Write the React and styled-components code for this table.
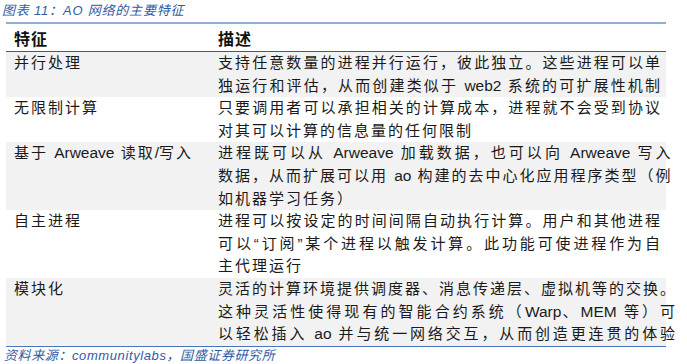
import React from 'react'
import styled, { createGlobalStyle } from 'styled-components'

const GlobalStyle = createGlobalStyle`
  body {
    margin: 0;
    background: #fff;
    font-family: "Liberation Sans", "Noto Sans CJK SC", sans-serif;
  }
`

const Page = styled.div`
  width: 687px;
  height: 364px;
  overflow: hidden;
  background: #fff;
`

const Caption = styled.div`
  height: 22px;
  line-height: 21px;
  padding-left: 2px;
  font-size: 13px;
  font-style: italic;
  color: #2f5ba6;
  letter-spacing: 0.8px;
  white-space: nowrap;
`

const Table = styled.div`
  width: 660px;
  margin-left: 6px;
  border-top: 2px solid #92acd8;
  border-bottom: 1px solid #4a74bd;
`

const Row = styled.div`
  display: grid;
  grid-template-columns: 204px 1fr;
  background: ${p => (p.$shade ? '#f2f2f2' : '#fff')};
`

const HeadRow = styled(Row)`
  height: 27px;
  align-items: center;
  border-bottom: 1px solid #2c5cb2;
`

const HeadCell = styled.div`
  padding-left: 8px;
  font-size: 16px;
  font-weight: bold;
  color: #111;
  letter-spacing: 1px;
`

const Cell = styled.div`
  padding: 0 4px 0 8px;
  font-size: 15px;
  color: #1a1a1a;
  letter-spacing: 2px;
`

const Line = styled.div`
  height: 22.6px;
  line-height: 22.6px;
  white-space: nowrap;
  text-align: left;
  text-align-last: ${p => (p.$full ? 'justify' : 'left')};
`

const Latin = styled.span`
  letter-spacing: 0;
  font-size: 15.5px;
`

const Source = styled(Caption)`
  height: auto;
  line-height: 17px;
  padding: 0 0 0 4px;
  letter-spacing: 0.6px;
`

const rows = [
  {
    name: '并行处理',
    lines: ['支持任意数量的进程并行运行，彼此独立。这些进程可以单', '独运行和评估，从而创建类似于 web2 系统的可扩展性机制'],
    last: true
  },
  {
    name: '无限制计算',
    lines: ['只要调用者可以承担相关的计算成本，进程就不会受到协议', '对其可以计算的信息量的任何限制']
  },
  {
    name: '基于 Arweave 读取/写入',
    lines: ['进程既可以从 Arweave 加载数据，也可以向 Arweave 写入', '数据，从而扩展可以用 ao 构建的去中心化应用程序类型（例', '如机器学习任务）']
  },
  {
    name: '自主进程',
    lines: ['进程可以按设定的时间间隔自动执行计算。用户和其他进程', '可以“订阅”某个进程以触发计算。此功能可使进程作为自', '主代理运行']
  },
  {
    name: '模块化',
    lines: ['灵活的计算环境提供调度器、消息传递层、虚拟机等的交换。', '这种灵活性使得现有的智能合约系统（Warp、MEM 等）可', '以轻松插入 ao 并与统一网络交互，从而创造更连贯的体验'],
    last: true
  }
]

// keep latin words tight, only CJK gets the wide spacing
const Text = ({ children }) =>
  children.split(/([A-Za-z0-9/]+)/).map((part, i) =>
    i % 2 ? <Latin key={i}>{part}</Latin> : part
  )

const App = () => {
  return (
    <Page>
      <GlobalStyle />
      <Caption>图表 11：AO 网络的主要特征</Caption>
      <Table>
        <HeadRow>
          <HeadCell>特征</HeadCell>
          <HeadCell>描述</HeadCell>
        </HeadRow>
        {rows.map((r, i) => (
          <Row key={r.name} $shade={i % 2 === 0}>
            <Cell>
              <Line><Text>{r.name}</Text></Line>
            </Cell>
            <Cell>
              {r.lines.map((l, j) => (
                <Line key={j} $full={j < r.lines.length - 1 || r.last}>
                  <Text>{l}</Text>
                </Line>
              ))}
            </Cell>
          </Row>
        ))}
      </Table>
      <Source>资料来源：communitylabs，国盛证券研究所</Source>
    </Page>
  )
}

export default App
